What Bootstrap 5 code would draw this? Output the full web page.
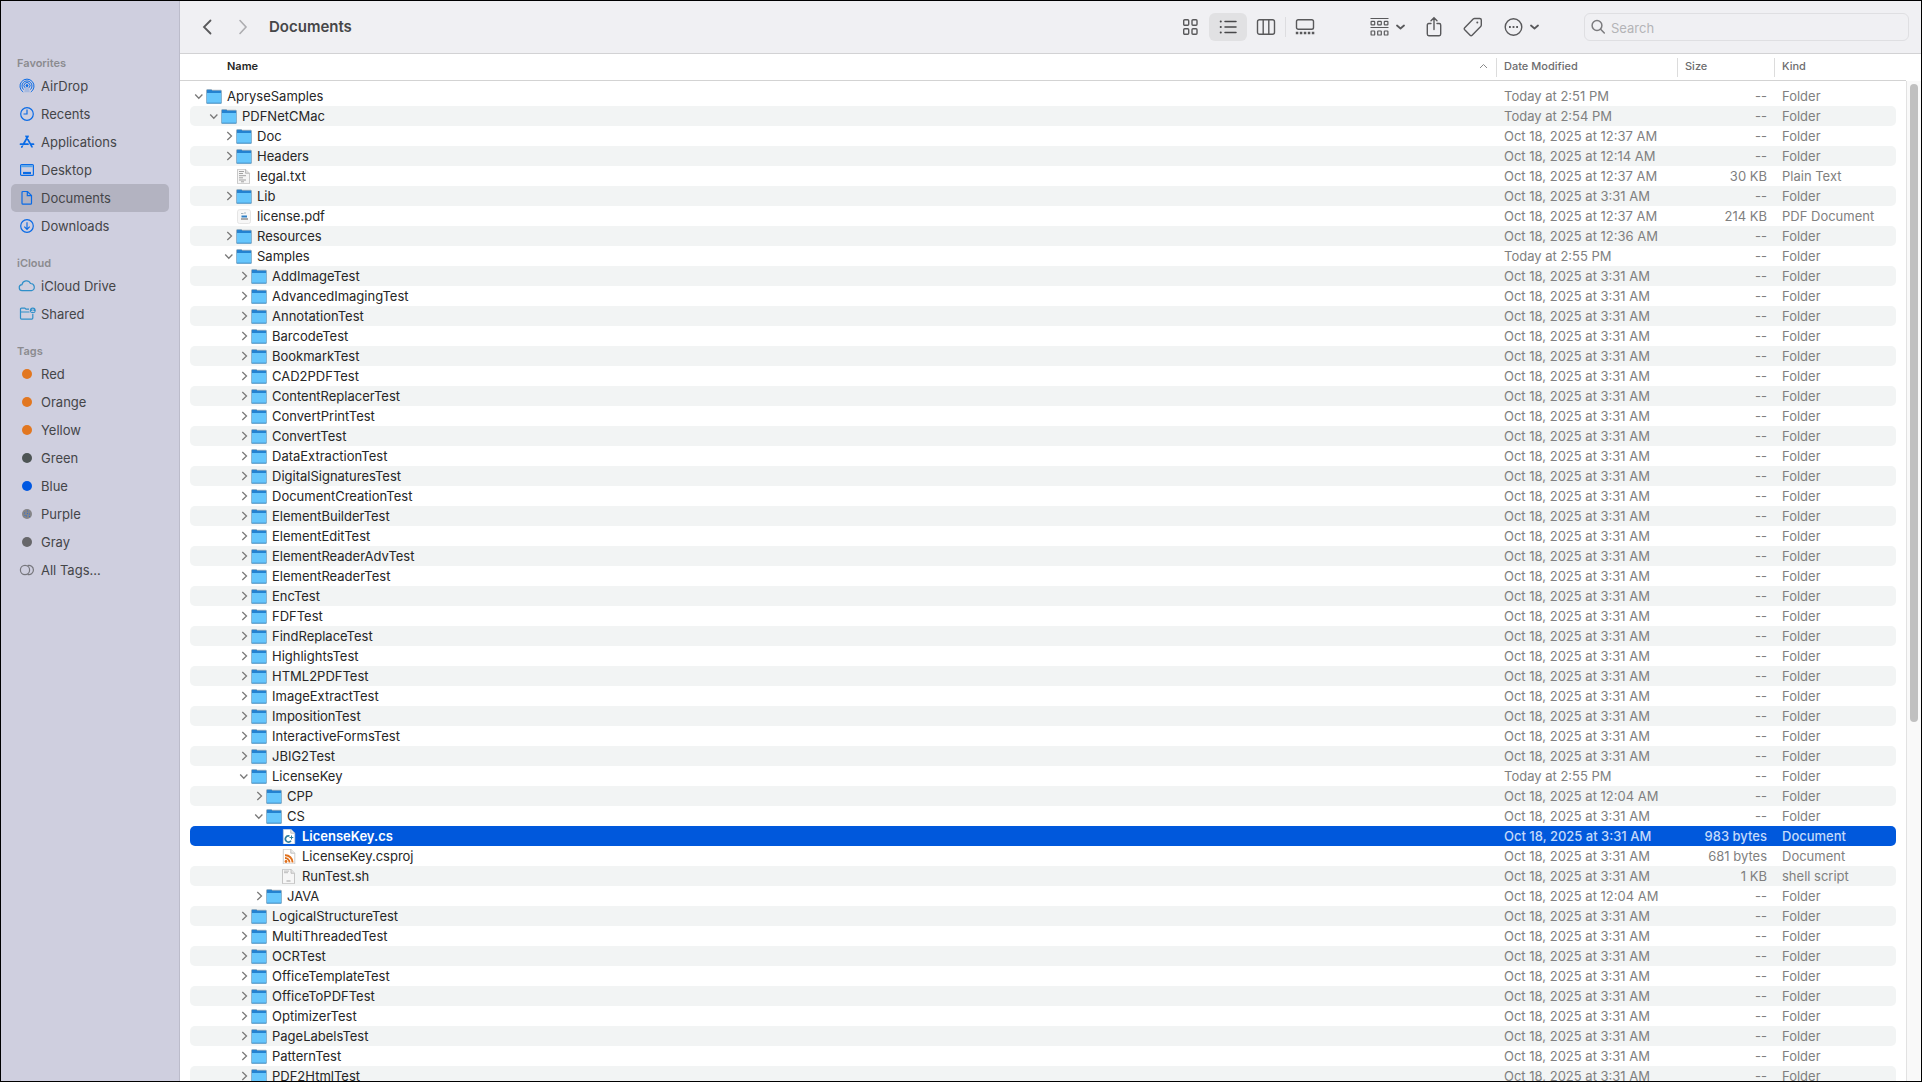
<!DOCTYPE html>
<html lang="en">
<head>
<meta charset="utf-8">
<meta name="viewport" content="width=device-width, initial-scale=1">
<title>Documents</title>
<link href="https://cdn.jsdelivr.net/npm/bootstrap@5.3.0/dist/css/bootstrap.min.css" rel="stylesheet">
<style>
body { font-family: Inter, "Liberation Sans", sans-serif; font-size: 13px; line-height: 20px; color: #262626; }
.finder { height: 100vh; border: 1px solid #000; background: #fff; }
.finder button { border: 0; background: none; padding: 0; color: inherit; }
svg { display: block; fill: none; stroke: currentColor; flex: none; }

.side { width: 179px; background: #cfcfdf; border-right: 1px solid #bcbccb; padding: 53px 10px 0; }
.side h2 { font-size: 11px; line-height: 18px; font-weight: 600; color: #8b8b8f; padding-left: 6px; margin: 0; }
.side ul + h2 { margin-top: 14px; }
.side a { height: 28px; gap: 5px; padding-left: 7px; color: #444548; text-decoration: none; border-radius: 5px; }
.side a.current { background: #b3b3c1; }
.side svg { color: #0a6be6; }
.side .sky { color: #2f8fc9; }
.side .plain { color: #77777d; }

.tools { height: 53px; background: #f0f0f3; border-bottom: 1px solid #d2d2d4; padding: 0 12px 0 17px; color: #59595b; }
.tools h1 { font-size: 15px; line-height: 20px; font-weight: 600; color: #464648; margin: 0 0 0 16px; }
.nav-arrow { width: 20px; margin-right: 16px; }
.nav-arrow svg { margin: 0 auto; }
.finder .nav-arrow:disabled { color: #adadb0; margin-right: 0; }
.views { margin-right: 46px; }
.views button { width: 38px; height: 28px; border-radius: 6px; }
.finder .views button.on { background: #e1e1e3; color: #474749; }
.views svg { margin: 0 auto; }
.views i { width: 1px; height: 20px; background: #dddde0; }
.acts { gap: 21px; margin-right: 45px; }
.acts button { display: flex; align-items: center; gap: 7px; }
.find { width: 325px; height: 28px; border: 1px solid #dfdfe2; border-radius: 6px; padding: 0 6px; gap: 6px; color: #7b7b7e; }
.find input { border: 0; background: none; outline: 0; min-width: 0; padding: 2px 0 0; color: #444; }
.find input::placeholder { color: #b4b4b7; opacity: 1; }

.list { padding: 0 10px; background: linear-gradient(#d3d3d3, #d3d3d3) 0 26px / 100% 1px no-repeat; }
.files { width: 100%; table-layout: fixed; border-collapse: separate; border-spacing: 0; white-space: nowrap; }
.files th { height: 26px; padding: 0 0 2px 8px; font-size: 11px; font-weight: 500; color: #6d6d6f; }
.files th + th { background: linear-gradient(#dcdcdc, #dcdcdc) 0 4px / 1px 19px no-repeat; }
.files th:first-child { padding: 0 8px 2px 37px; font-weight: 600; color: #262626; }
.files th svg { color: #8a8a8a; }
.files tbody::before { content: ""; display: block; height: 6px; }
.files td { height: 20px; line-height: 19px; padding: 1px 0 0 8px; color: #7f7f7f; }
.files td:first-child { padding-left: 3px; color: #262626; border-radius: 5px 0 0 5px; }
.files td:last-child { border-radius: 0 5px 5px 0; }
.files td:nth-child(3) { text-align: right; padding-right: 7px; }
.files tbody tr:nth-child(even) td { background: #f2f4f4; }
.files tbody tr.picked td { background: #0058dc; color: #c4dafa; font-weight: 500; }
.files tbody tr.picked td:first-child { color: #fff; font-weight: 600; }
.col-date { width: 181px; } .col-size { width: 97px; } .col-kind { width: 122px; }
.finder .twist { width: 12px; height: 19px; margin-right: 1px; color: #7a7a7a; }
.fname { margin-left: 5px; }
.lv1 { padding-left: 15px; } .lv2 { padding-left: 30px; } .lv3 { padding-left: 45px; } .lv4 { padding-left: 60px; } .lv5 { padding-left: 75px; }

.track { width: 15px; margin-top: 27px; background: #f9f9f9; border-left: 1px solid #e2e2e2; padding: 3px 3px 0; }
.thumb { width: 8px; height: 64%; border-radius: 4px; background: #c0c0c0; }
</style>
<script src="https://cdn.jsdelivr.net/npm/bootstrap@5.3.0/dist/js/bootstrap.bundle.min.js"></script>
</head>
<body>
<svg width="0" height="0" class="position-absolute" aria-hidden="true">
  <symbol id="folder" viewBox="0 0.5 16 15">
    <path d="M.5 2Q.5.900 1.500.900h3.800l1 .8h8.400q.8 0 .8.8V14.300q0 .8-.8.8H1.300q-.8 0-.8-.8z" fill="#2482d0" stroke="#9ba6ad" stroke-width=".6"/>
    <path d="M.8 4.500h14.400v9.500q0 .6-.6.6H1.400q-.6 0-.6-.6z" fill="#66c6fc" stroke="none"/>
    <path d="M.8 14.500h14.400" stroke="#4a9fd8"/>
  </symbol>
  <symbol id="txt" viewBox="0 0.5 16 15">
    <path d="M1.500.8h8l4 4v10.400h-12z" fill="#f5f5f5" stroke="#bdbdbd" stroke-width=".8"/>
    <path d="M9.500.8v4h4" fill="#ddd" stroke="#a8a8a8" stroke-width=".7"/>
    <path d="M3 3h5M3 5h4M3 7.200h7M3 9.300h4M3 11.500h7M5 13.300h3" stroke="#999" stroke-width=".9"/>
  </symbol>
  <symbol id="pdf" viewBox="0 0.5 16 15">
    <rect x="1.500" y="1.200" width="13" height="13.800" rx="2" fill="#f7f7f7" stroke="#e0e0e0" stroke-width=".8"/>
    <path d="M5 5h2.500M8 4.500h2" stroke="#a5b4be"/><path d="M5.500 8h5.500" stroke="#2f7fc4" stroke-width="2"/><path d="M5 10.500h7" stroke="#777" stroke-width="1.200"/>
  </symbol>
  <symbol id="cs" viewBox="0 0.5 16 15">
    <path d="M2.300.7h7.500l4 4v10.700H2.300z" fill="#fff" stroke="#c9c9c9" stroke-width=".6"/>
    <path d="M9.800.7v4h4" fill="#eee" stroke="#aaa" stroke-width=".7"/>
    <path d="M8.500 7.500a3.100 3.100 0 1 0 1.500 4.800" stroke="#2f7d9e" stroke-width="1.700"/><path d="M10.500 7v4M8.500 9h3.800" stroke="#2f7d9e" stroke-width="1"/>
  </symbol>
  <symbol id="rss" viewBox="0 0.5 16 15">
    <path d="M2.300.7h7.500l4 4v10.700H2.300z" fill="#fff" stroke="#c0c0c0" stroke-width=".8"/>
    <path d="M9.800.7v4h4" fill="#eee" stroke="#aaa" stroke-width=".7"/>
    <path d="M4 9.500a4.500 4.500 0 0 1 4.500 4.500M4 6.700a7.300 7.300 0 0 1 7.600 7.300" stroke="#e0701c" stroke-width="1.900"/><circle cx="5" cy="13" r="1.400" fill="#e0701c" stroke="none"/>
  </symbol>
  <symbol id="sh" viewBox="0 0.5 16 15">
    <path d="M1.500.8h8.500l3.500 4v10.400h-12z" fill="#f6f6f6" stroke="#b9b9b9" stroke-width=".8"/>
    <path d="M10 .8v4h3.500" fill="#e4e4e4" stroke="#b0b0b0" stroke-width=".7"/>
    <path d="M3 2.600h5M3 4.200h4" stroke="#bbb"/><path d="M5.500 12.500h4" stroke="#999" stroke-width=".9"/>
  </symbol>
  <symbol id="open" viewBox="0 0 12 19"><path d="M2.200 7.500l3.600 3.800 3.600-3.800" stroke-width="1.300"/></symbol>
  <symbol id="shut" viewBox="0 0 12 19"><path d="M4.300 5l4.200 4-4.200 4" stroke-width="1.300"/></symbol>
  <symbol id="more-down" viewBox="0 0 9 8"><path d="M1 2.500l3.500 3 3.500-3" stroke-width="1.800" stroke-linecap="round" stroke-linejoin="round"/></symbol>
</svg>

<div class="finder d-flex overflow-hidden">
  <nav class="side flex-shrink-0" aria-label="Sidebar">
    <h2>Favorites</h2>
    <ul class="list-unstyled mb-0">
      <li><a href="#" class="d-flex align-items-center"><svg width="18" height="18" stroke-width="1"><path d="M5.200 15A7 7 0 1 1 12.800 15M5.600 12.600a5 5 0 1 1 6.800 0M7 10.800a3 3 0 1 1 4 0"/><path d="M9 8.300l2 3 .8 4H6.200l.8-4z" fill="currentColor" stroke="none" opacity=".2"/><circle cx="9" cy="8.600" r="1" fill="currentColor"/></svg>AirDrop</a></li>
      <li><a href="#" class="d-flex align-items-center"><svg width="18" height="18" stroke-width="1.200"><circle cx="9" cy="9" r="6.300"/><path d="M9 4.500V9H5.500"/></svg>Recents</a></li>
      <li><a href="#" class="d-flex align-items-center"><svg width="18" height="18" stroke-width="1.700" stroke-linecap="round"><path d="M10 3.200L5.200 11.500M8 3.200l6 10.600M2.500 11.200H10M13 11.200h2.500M4.200 13.300l-.4.700"/></svg>Applications</a></li>
      <li><a href="#" class="d-flex align-items-center"><svg width="18" height="18" stroke-width="1.200"><rect x="2.600" y="3.600" width="12.800" height="10.800" rx="1"/><path d="M3.200 5.200h11.600" stroke="#59a5ea" stroke-width="2"/><path d="M5 12h8" stroke-width="2.200"/></svg>Desktop</a></li>
      <li><a href="#" class="current d-flex align-items-center" aria-current="page"><svg width="18" height="18" stroke-width="1.200"><path d="M5 2.500h4.500l4 4v7.700q0 1-1 1H5q-1 0-1-1V3.500q0-1 1-1zM9.300 2.500v4.200h4.200"/></svg>Documents</a></li>
      <li><a href="#" class="d-flex align-items-center"><svg width="18" height="18" stroke-width="1.200"><circle cx="9" cy="9" r="6.300"/><path d="M9 5.300v7M6.300 9.700L9 12.400l2.700-2.700"/></svg>Downloads</a></li>
    </ul>
    <h2>iCloud</h2>
    <ul class="list-unstyled mb-0">
      <li><a href="#" class="d-flex align-items-center"><svg class="sky" width="18" height="18" stroke-width="1.200"><path d="M4.500 13.600a3 3 0 0 1-.5-6A4.500 4.500 0 0 1 12.500 6.500a3.600 3.600 0 0 1 1 7.100z"/></svg>iCloud Drive</a></li>
      <li><a href="#" class="d-flex align-items-center"><svg class="sky" width="18" height="18" stroke-width="1.200"><path d="M11 4.200H8L6.800 3.100H3.500q-1 0-1 1v9q0 1 1 1h10.300q1 0 1-1V9M2.500 7h9"/><circle cx="14.800" cy="5.300" r="2.900" fill="currentColor" stroke="none"/><path d="M13.300 6.800q1.500-1.500 3 0" stroke="#cfcfdf"/><circle cx="14.800" cy="4.600" r=".6" stroke="#cfcfdf" stroke-width=".8"/></svg>Shared</a></li>
    </ul>
    <h2>Tags</h2>
    <ul class="list-unstyled mb-0">
      <li><a href="#" class="d-flex align-items-center"><svg width="18" height="18"><circle cx="9" cy="9" r="5" fill="#e27720" stroke="none"/></svg>Red</a></li>
      <li><a href="#" class="d-flex align-items-center"><svg width="18" height="18"><circle cx="9" cy="9" r="5" fill="#e27720" stroke="none"/></svg>Orange</a></li>
      <li><a href="#" class="d-flex align-items-center"><svg width="18" height="18"><circle cx="9" cy="9" r="5" fill="#e27720" stroke="none"/></svg>Yellow</a></li>
      <li><a href="#" class="d-flex align-items-center"><svg width="18" height="18"><circle cx="9" cy="9" r="5" fill="#4d5454" stroke="none"/></svg>Green</a></li>
      <li><a href="#" class="d-flex align-items-center"><svg width="18" height="18"><circle cx="9" cy="9" r="5" fill="#0058e2" stroke="none"/></svg>Blue</a></li>
      <li><a href="#" class="d-flex align-items-center"><svg width="18" height="18"><circle cx="9" cy="9" r="5" fill="#858588" stroke="none"/><path d="M6 8h1M9 6h1M11 9h1M8 11h1M9 8.500h1M6.500 10.500h1M11 11.500h1" stroke="#2f6fd6"/></svg>Purple</a></li>
      <li><a href="#" class="d-flex align-items-center"><svg width="18" height="18"><circle cx="9" cy="9" r="5" fill="#67676a" stroke="none"/></svg>Gray</a></li>
      <li><a href="#" class="d-flex align-items-center"><svg class="plain" width="18" height="18" stroke-width="1.200"><circle cx="7" cy="9" r="4.600"/><path d="M9.500 4.600a4.600 4.600 0 1 1 0 8.800"/></svg>All Tags...</a></li>
    </ul>
  </nav>

  <main class="flex-grow-1 d-flex flex-column overflow-hidden">
    <header class="tools d-flex align-items-center flex-shrink-0">
      <button type="button" class="nav-arrow" aria-label="Back"><svg width="10" height="16" stroke-width="1.800" stroke-linecap="round"><path d="M8.500 1.500L2 8l6.500 6.500"/></svg></button>
      <button type="button" class="nav-arrow" aria-label="Forward" disabled><svg width="10" height="16" stroke-width="1.600" stroke-linecap="round"><path d="M2 1.500L8 8l-6 6.500"/></svg></button>
      <h1>Documents</h1>
      <div class="views d-flex align-items-center ms-auto" role="group" aria-label="View">
        <button type="button" aria-label="Icons"><svg width="16" height="18" stroke-width="1.400"><rect x="1.700" y="1.700" width="5" height="5.500" rx="1"/><rect x="10" y="1.700" width="5" height="5.500" rx="1"/><rect x="1.700" y="10.700" width="5" height="5.500" rx="1"/><rect x="10" y="10.700" width="5" height="5.500" rx="1"/></svg></button>
        <button type="button" class="on" aria-label="List" aria-pressed="true"><svg width="18" height="16" stroke-width="1.500" stroke-linecap="round"><path d="M6 2.500h11M6 8h11M6 13.500h11"/><path d="M1.700 2.500h.1M1.700 8h.1M1.700 13.500h.1" stroke-width="2"/></svg></button>
        <button type="button" aria-label="Columns"><svg width="20" height="18" stroke-width="1.400"><rect x="1.500" y="1.700" width="17" height="14.600" rx="2"/><path d="M7.200 1.700v14.600M12.800 1.700v14.600"/></svg></button>
        <i></i>
        <button type="button" aria-label="Gallery"><svg width="20" height="18" stroke-width="1.400"><rect x="1.500" y="1.700" width="17" height="9.600" rx="1.800"/><path d="M.8 15h18.500" stroke-width="2.600" stroke-dasharray="2.500 1.500"/></svg></button>
      </div>
      <div class="acts d-flex align-items-center">
        <button type="button" aria-label="Group"><svg width="19" height="20" stroke-width="1.200"><path d="M.5 1.500h18M.5 10.500h18"/><rect x="1.100" y="4.300" width="3.600" height="3.600" rx=".6"/><rect x="7.700" y="4.300" width="3.600" height="3.600" rx=".6"/><rect x="14.300" y="4.300" width="3.600" height="3.600" rx=".6"/><rect x="1.100" y="14" width="3.600" height="4" rx=".6"/><rect x="7.700" y="14" width="3.600" height="4" rx=".6"/><rect x="14.300" y="14" width="3.600" height="4" rx=".6"/></svg><svg width="9" height="8"><use href="#more-down"/></svg></button>
        <button type="button" aria-label="Share"><svg width="16" height="22" stroke-width="1.400" stroke-linecap="round"><path d="M5 7.500H2.800q-1.500 0-1.500 1.500v9q0 1.700 1.500 1.700h10.400q1.500 0 1.500-1.700V9q0-1.500-1.500-1.500H11M8 13.500V2M5 4.800L8 1.700l3 3.100"/></svg></button>
        <button type="button" aria-label="Tags"><svg width="20" height="20" stroke-width="1.400" stroke-linejoin="round"><path d="M11.500 1.500h5.200q1.600 0 1.600 1.600v5q0 .8-.6 1.400l-8.600 8.700q-1 1-2 0L1.700 12.800q-.9-1 0-2L10.200 2q.6-.5 1.300-.5z"/><circle cx="14.300" cy="5.500" r="1" fill="currentColor" stroke="none"/></svg></button>
        <button type="button" aria-label="More"><svg width="19" height="20" stroke-width="1.400"><circle cx="9.500" cy="10" r="8.300"/><path d="M5 10h1.800M8.600 10h1.800M12.200 10H14" stroke-width="1.900"/></svg><svg width="9" height="8"><use href="#more-down"/></svg></button>
      </div>
      <label class="find d-flex align-items-center">
        <svg width="14" height="16" stroke-width="1.500" stroke-linecap="round"><circle cx="6" cy="6.500" r="4.900"/><path d="M9.600 10.200l3.700 3.800"/></svg>
        <input type="search" class="flex-grow-1" placeholder="Search" aria-label="Search">
      </label>
    </header>

    <div class="flex-grow-1 d-flex overflow-hidden">
      <div class="list flex-grow-1 overflow-hidden">
        <table class="files">
          <colgroup><col><col class="col-date"><col class="col-size"><col class="col-kind"></colgroup>
          <thead>
            <tr>
              <th scope="col" aria-sort="ascending"><span class="d-flex align-items-center justify-content-between">Name<svg width="9" height="6"><path d="M1 5l3.500-3.500L8 5"/></svg></span></th>
              <th scope="col">Date Modified</th><th scope="col">Size</th><th scope="col">Kind</th>
            </tr>
          </thead>
          <tbody id="rows"></tbody>
        </table>
      </div>
      <div class="track flex-shrink-0"><div class="thumb"></div></div>
    </div>
  </main>
</div>

<script>
// level | state (open, shut or a file icon) | name | date | size | kind
const oct = t => 'Oct 18, 2025 at ' + t + ' AM';
const dir = (level, state, name, date = oct('3:31')) => [level, state, name, date, '--', 'Folder'];
const tests = s => s.split(' ').map(n => dir(3, 'shut', n + 'Test'));
const rows = [
  dir(0, 'open', 'ApryseSamples', 'Today at 2:51 PM'),
  dir(1, 'open', 'PDFNetCMac', 'Today at 2:54 PM'),
  dir(2, 'shut', 'Doc', oct('12:37')),
  dir(2, 'shut', 'Headers', oct('12:14')),
  [2, 'txt', 'legal.txt', oct('12:37'), '30 KB', 'Plain Text'],
  dir(2, 'shut', 'Lib'),
  [2, 'pdf', 'license.pdf', oct('12:37'), '214 KB', 'PDF Document'],
  dir(2, 'shut', 'Resources', oct('12:36')),
  dir(2, 'open', 'Samples', 'Today at 2:55 PM'),
  ...tests('AddImage AdvancedImaging Annotation Barcode Bookmark CAD2PDF ContentReplacer ConvertPrint Convert DataExtraction DigitalSignatures DocumentCreation ElementBuilder ElementEdit ElementReaderAdv ElementReader Enc FDF FindReplace Highlights HTML2PDF ImageExtract Imposition InteractiveForms JBIG2'),
  dir(3, 'open', 'LicenseKey', 'Today at 2:55 PM'),
  dir(4, 'shut', 'CPP', oct('12:04')),
  dir(4, 'open', 'CS'),
  [5, 'cs', 'LicenseKey.cs', oct('3:31'), '983 bytes', 'Document', true],
  [5, 'rss', 'LicenseKey.csproj', oct('3:31'), '681 bytes', 'Document'],
  [5, 'sh', 'RunTest.sh', oct('3:31'), '1 KB', 'shell script'],
  dir(4, 'shut', 'JAVA', oct('12:04')),
  ...tests('LogicalStructure MultiThreaded OCR OfficeTemplate OfficeToPDF Optimizer PageLabels Pattern PDF2Html')
];
document.getElementById('rows').innerHTML = rows.map(([level, state, name, date, size, kind, picked]) => {
  const folder = state === 'open' || state === 'shut';
  const twist = folder
    ? `<button type="button" class="twist" aria-label="Toggle ${name}" aria-expanded="${state === 'open'}"><svg width="12" height="19"><use href="#${state}"/></svg></button>`
    : '<span class="twist"></span>';
  return `<tr${picked ? ' class="picked" aria-selected="true"' : ''}><td><div class="d-flex align-items-center lv${level}">${twist}<svg width="16" height="15"><use href="#${folder ? 'folder' : state}"/></svg><span class="fname">${name}</span></div></td><td>${date}</td><td>${size}</td><td>${kind}</td></tr>`;
}).join('');
</script>
</body>
</html>
